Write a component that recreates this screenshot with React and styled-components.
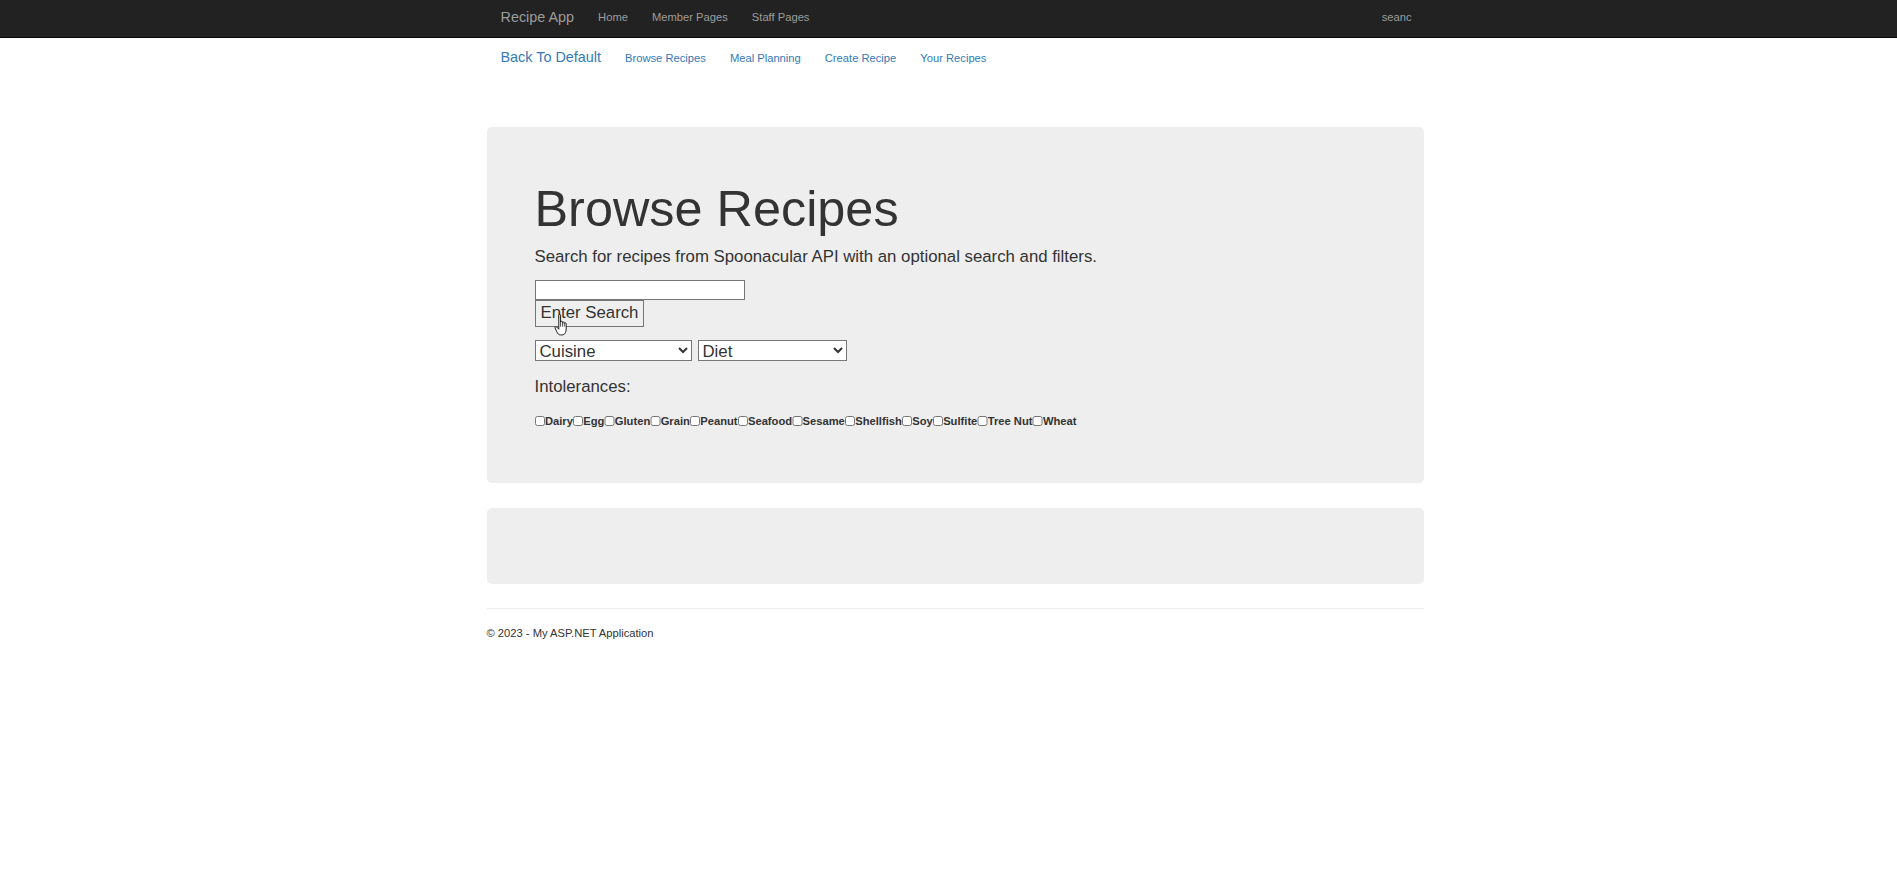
import React from "react";
import styled, { createGlobalStyle } from "styled-components";

const GlobalStyle = createGlobalStyle`
  body {
    margin: 0;
    font-family: "Liberation Sans", Arial, Helvetica, sans-serif;
    font-size: 11.2px;
    line-height: 1.42857;
    color: #333;
    background: #fff;
  }
  * {
    box-sizing: border-box;
  }
`;

const intolerances = [
  "Dairy",
  "Egg",
  "Gluten",
  "Grain",
  "Peanut",
  "Seafood",
  "Sesame",
  "Shellfish",
  "Soy",
  "Sulfite",
  "Tree Nut",
  "Wheat",
];

const HandCursor = () => (
  <svg width="16" height="23" viewBox="0 0 12 21">
    <path
      d="M4 2 C4 1 5.6 1 5.6 2 V8.2 C5.6 7.4 7.3 7.4 7.3 8.2 V8.8 C7.3 8 9 8 9 8.8 V9.6 C9 8.8 10.7 8.8 10.7 9.6 V14.5 C10.7 17.5 9.5 20 7 20 H5.5 C3.8 20 3 18.8 2.2 17.2 L0.6 13.6 C0.2 12.7 1.3 12 2 12.7 L4 14.8 Z"
      fill="#fff"
      stroke="#000"
      strokeWidth="0.8"
      strokeLinejoin="round"
    />
    <path d="M5.6 8.2 V12.5 M7.3 8.8 V12.5 M9 9.6 V12.5" stroke="#000" strokeWidth="0.6" />
  </svg>
);

const App = () => {
  return (
    <>
      <GlobalStyle />
      <Navbar>
        <NavInner>
          <Brand>Recipe App</Brand>
          <NavLink>Home</NavLink>
          <NavLink>Member Pages</NavLink>
          <NavLink>Staff Pages</NavLink>
          <UserName>seanc</UserName>
        </NavInner>
      </Navbar>
      <SubNav>
        <SubBrand>Back To Default</SubBrand>
        <SubLink>Browse Recipes</SubLink>
        <SubLink>Meal Planning</SubLink>
        <SubLink>Create Recipe</SubLink>
        <SubLink>Your Recipes</SubLink>
      </SubNav>
      <Main>
        <Jumbotron>
          <Title>Browse Recipes</Title>
          <Lead>Search for recipes from Spoonacular API with an optional search and filters.</Lead>
          <SearchInput type="text" />
          <ButtonWrap>
            <SearchButton>Enter Search</SearchButton>
            <Cursor>
              <HandCursor />
            </Cursor>
          </ButtonWrap>
          <FilterRow>
            <Select $width={157}>
              <option>Cuisine</option>
            </Select>
            <Select $width={149}>
              <option>Diet</option>
            </Select>
          </FilterRow>
          <SectionLabel>Intolerances:</SectionLabel>
          <CheckRow>
            {intolerances.map((name) => (
              <Check key={name}>
                <input type="checkbox" />
                {name}
              </Check>
            ))}
          </CheckRow>
        </Jumbotron>
        <Results />
        <Rule />
        <Footer>© 2023 - My ASP.NET Application</Footer>
      </Main>
    </>
  );
};

const Container = styled.div`
  width: 937px;
  margin: 0 auto 0 calc(50% - 462px);
`;

const Navbar = styled.nav`
  background: #222;
  border-bottom: 1px solid #080808;
`;

const NavInner = styled(Container)`
  display: flex;
  align-items: flex-start;
  height: 37px;
  padding-top: 9px;
  line-height: 16px;
`;

const Brand = styled.a`
  padding: 0 12px 0 14px;
  font-size: 14.4px;
  color: #9d9d9d;
`;

const NavLink = styled.a`
  padding: 0 12px;
  font-size: 11.2px;
  color: #9d9d9d;
`;

const UserName = styled(NavLink)`
  margin-left: auto;
`;

const SubNav = styled(Container)`
  display: flex;
  align-items: center;
  height: 39px;
`;

const SubBrand = styled.a`
  padding: 0 12px 0 14px;
  font-size: 14.4px;
  color: #337ab7;
`;

const SubLink = styled.a`
  padding: 0 12px;
  font-size: 11.2px;
  color: #337ab7;
`;

const Main = styled(Container)`
  padding-top: 50px;
`;

const Jumbotron = styled.div`
  background: #eee;
  border-radius: 5px;
  padding: 38.4px 48px;
  margin-bottom: 25px;
`;

const Title = styled.h1`
  margin: 16px 0 8px;
  font-size: 50.4px;
  font-weight: 500;
  line-height: 1.1;
  color: #333;
`;

const Lead = styled.p`
  margin: 0 0 11px;
  font-size: 16.8px;
  line-height: 24px;
`;

const SearchInput = styled.input`
  display: block;
  width: 210px;
  height: 20px;
  margin: 0;
  padding: 0 2px;
  font: 16.8px "Liberation Sans", Arial, sans-serif;
  border: 1px solid #767676;
  background: #fff;
`;

const ButtonWrap = styled.div`
  position: relative;
  width: max-content;
`;

const SearchButton = styled.button`
  display: block;
  height: 27px;
  padding: 0 5px;
  margin: 0;
  font: 16.8px "Liberation Sans", Arial, sans-serif;
  color: #333;
  background: #efefef;
  border: 1px solid #767676;
  border-radius: 0;
`;

const Cursor = styled.div`
  position: absolute;
  left: 18px;
  top: 13px;
  line-height: 0;
`;

const FilterRow = styled.div`
  display: flex;
  gap: 6px;
  margin-top: 13px;
`;

const Select = styled.select`
  width: ${(p) => p.$width}px;
  height: 21px;
  padding: 0;
  margin: 0;
  font: 16.8px "Liberation Sans", Arial, sans-serif;
  line-height: 19px;
  color: #333;
  background: #fff;
  border: 1px solid #767676;
  border-radius: 0;
`;

const SectionLabel = styled.p`
  margin: 14px 0 0;
  font-size: 16.8px;
  line-height: 24px;
`;

const CheckRow = styled.div`
  display: flex;
  margin: 14px 0 16px;
  line-height: 16px;
`;

const Check = styled.label`
  display: inline-flex;
  align-items: center;
  font-size: 11.2px;
  font-weight: bold;

  input {
    width: 10.4px;
    height: 10.4px;
    margin: 0;
  }
`;

const Results = styled.div`
  height: 76px;
  background: #eee;
  border-radius: 5px;
  margin-bottom: 24px;
`;

const Rule = styled.hr`
  margin: 0 0 16px;
  border: 0;
  border-top: 1px solid #eee;
`;

const Footer = styled.p`
  margin: 0;
  font-size: 11.2px;
  line-height: 16px;
`;

export default App;
